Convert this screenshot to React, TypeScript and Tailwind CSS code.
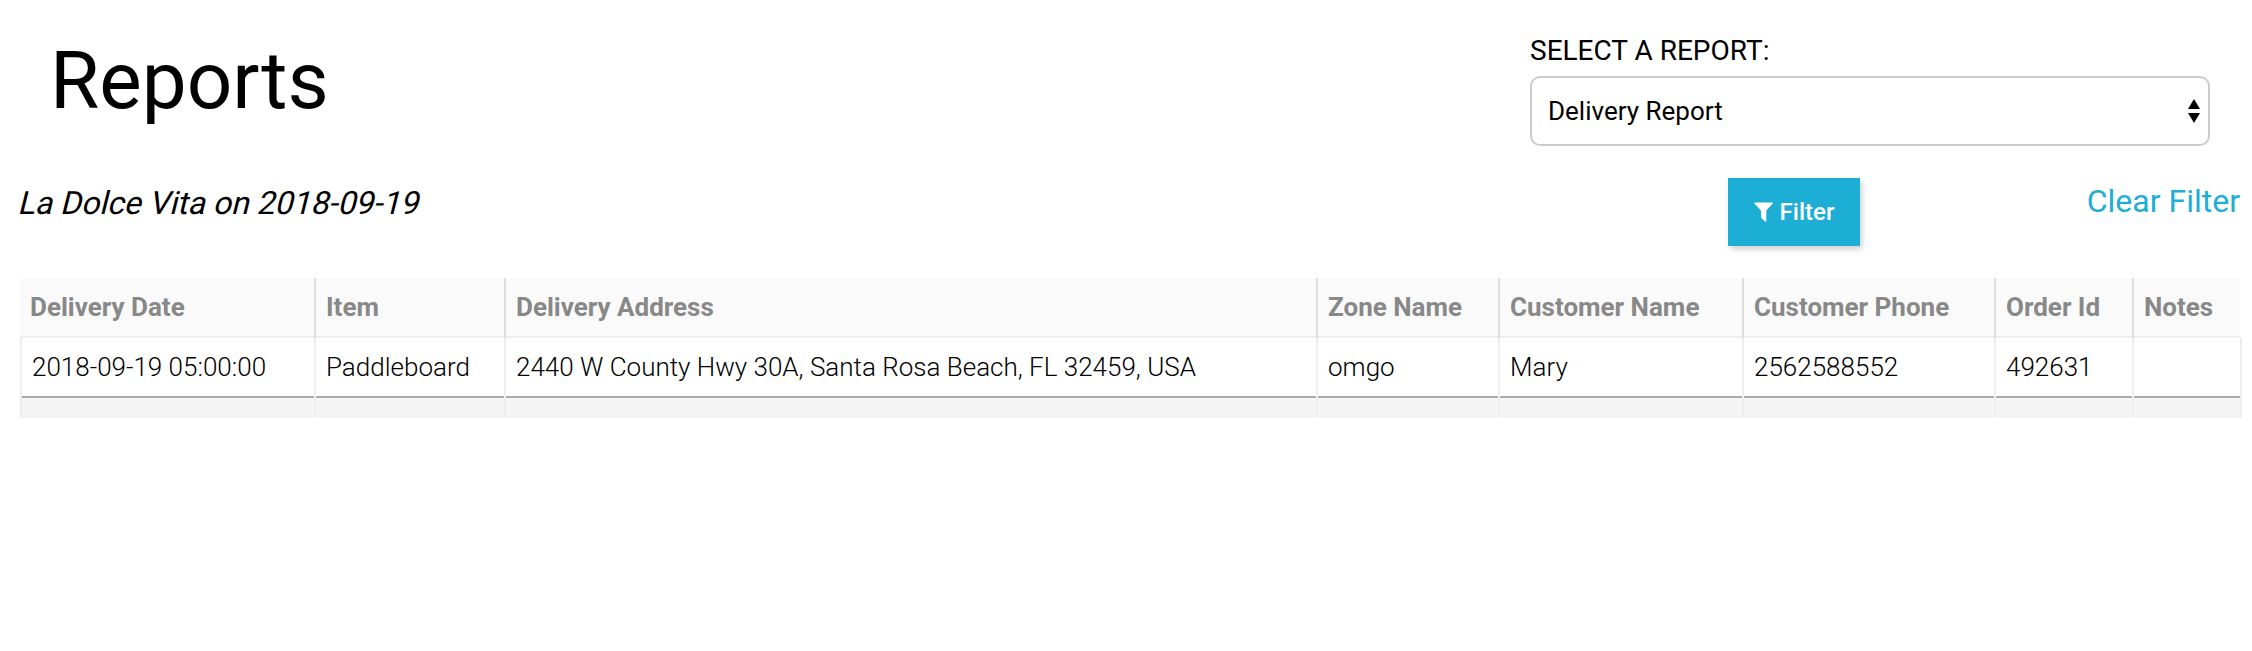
import React from "react";

type Column = { title: string; value: string; width: string };

const columns: Column[] = [
  { title: "Delivery Date", value: "2018-09-19 05:00:00", width: "w-[296px]" },
  { title: "Item", value: "Paddleboard", width: "w-[190px]" },
  { title: "Delivery Address", value: "2440 W County Hwy 30A, Santa Rosa Beach, FL 32459, USA", width: "w-[812px]" },
  { title: "Zone Name", value: "omgo", width: "w-[182px]" },
  { title: "Customer Name", value: "Mary", width: "w-[244px]" },
  { title: "Customer Phone", value: "2562588552", width: "w-[252px]" },
  { title: "Order Id", value: "492631", width: "w-[138px]" },
  { title: "Notes", value: "", width: "w-[108px]" },
];

function ReportTable() {
  return (
    <div className="ml-5 flex w-[2222px]" role="table">
      {columns.map((column, i) => {
        const first = i === 0;
        const last = i === columns.length - 1;
        return (
          <div key={column.title} className={`flex shrink-0 flex-col ${column.width}`}>
            <div
              className={`flex h-[60px] items-center whitespace-nowrap border-[#dddddd] bg-[#fafafa] pb-[2px] pl-[10px] text-[26px] font-bold text-[#888888] shadow-[inset_0_-2px_0_#eeeeee] ${last ? "mr-[2px]" : "border-r-2"}`}
            >
              {column.title}
            </div>
            <div className={`border-r-2 border-[#eeeeee] ${first ? "border-l-2" : ""}`}>
              <div className="flex h-[60px] items-center whitespace-nowrap border-b-2 border-[#aaaaaa] pl-[10px] text-[26px] font-light">
                {column.value}
              </div>
              <div className="h-5 bg-[#f4f4f4]" />
            </div>
          </div>
        );
      })}
    </div>
  );
}

export default function App() {
  return (
    <main className="h-[651px] w-[2252px] overflow-hidden bg-white font-['Roboto',sans-serif] text-black">
      <header className="flex h-[178px] items-start justify-between pl-[50px] pr-[42px]">
        <h1 className="pt-[34px] text-[80px] leading-[94px]">Reports</h1>
        <div className="w-[680px] pt-[34px]">
          <label className="block text-[28px] leading-[33px]">SELECT A REPORT:</label>
          <div className="mt-[9px] flex h-[70px] items-center justify-between rounded-[10px] border-2 border-[#cccccc] pl-4 pr-2 text-[26px]">
            <span>Delivery Report</span>
            <svg width="12" height="24" viewBox="0 0 12 24" fill="black">
              <path d="M6 0L12 10H0ZM0 14H12L6 24Z" />
            </svg>
          </div>
        </div>
      </header>
      <section className="flex h-[100px] items-start pl-5 pr-3">
        <div className="w-[1708px] pt-[6px] text-[32px] leading-[38px]">
          <p className="w-fit -skew-x-14">La Dolce Vita on 2018-09-19</p>
        </div>
        <button className="flex h-[68px] w-[132px] items-center justify-center gap-[7px] bg-[#1daed5] text-[24px] font-medium text-white shadow-[2px_3px_6px_rgba(0,0,0,0.2)]">
          <svg width="19" height="20" viewBox="0 0 19 20" fill="currentColor">
            <path d="M.8.5H18.2Q19.2.5 18.8 1.5L12.3 8.5V19Q12 20 11 19.4L7.3 16Q7 15.7 7 15V8.5L.3 1.5Q0 .7.8.5Z" />
          </svg>
          <span>Filter</span>
        </button>
        <a className="ml-auto pt-1 text-[32px] leading-[38px] text-[#1daed5]">Clear Filter</a>
      </section>
      <ReportTable />
    </main>
  );
}
